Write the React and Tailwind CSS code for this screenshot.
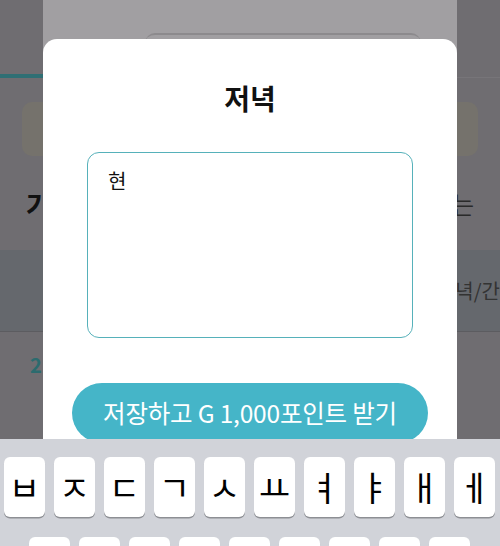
import React from "react";

const row1 = ["ㅂ", "ㅈ", "ㄷ", "ㄱ", "ㅅ", "ㅛ", "ㅕ", "ㅑ", "ㅐ", "ㅔ"];
const row2 = ["ㅁ", "ㄴ", "ㅇ", "ㄹ", "ㅎ", "ㅗ", "ㅓ", "ㅏ", "ㅣ"];

function Key({ ch }) {
  return (
    <div className="w-[41px] h-[60px] shrink-0 rounded-[6px] bg-white shadow-[0_1.5px_0_#8d8f94] flex items-center justify-center text-[34px] leading-none text-black">
      {ch}
    </div>
  );
}

export default function App() {
  return (
    <div
      className="relative w-[500px] h-[546px] overflow-hidden bg-[#6f6d71]"
      style={{ fontFamily: '"Noto Sans CJK KR", "Noto Sans", sans-serif' }}
    >
      {/* dimmed background page */}
      <div className="flex flex-col">
        <div className="h-[74px]" />
        <div className="flex h-[4px]">
          <div className="w-[60px] bg-[#2f6f74]" />
          <div className="flex-1 border-b border-[#777579]" />
        </div>
        <div className="flex justify-between px-[22px] pt-[24px] h-[90px]">
          <div className="w-[160px] h-[54px] rounded-[10px] bg-[#75726c]" />
          <div className="w-[160px] h-[54px] rounded-[10px] bg-[#75726c]" />
        </div>
        <div className="flex justify-between items-center px-[26px] h-[72px]">
          <span className="text-[28px] font-bold text-[#111]">가</span>
          <span className="text-[24px] text-[#2a2a2a]">는</span>
        </div>
        <div className="h-[82px] mt-[10px] bg-[#65686d] border-b border-[#5c5c60] flex items-center justify-end">
          <span className="text-[20px] text-[#333] whitespace-nowrap">녁/간</span>
        </div>
        <div className="flex items-center px-[30px] h-[66px]">
          <span className="text-[20px] font-bold text-[#2c6b6e]">2</span>
        </div>
      </div>

      {/* sheet behind */}
      <div className="absolute left-[43px] top-0 w-[414px] h-[100px] bg-[#a19fa2]">
        <div className="mt-[33px] ml-[102px] w-[276px] h-[20px] rounded-t-[10px] border-t-2 border-[#8c8a8d]" />
      </div>

      {/* modal */}
      <div className="absolute left-[43px] top-[39px] w-[414px] h-[420px] rounded-[14px] bg-white flex flex-col">
        <div className="pt-[41px] text-center text-[28px] leading-[36px] font-bold text-[#111]">
          저녁
        </div>
        <div className="mx-[44px] mt-[36px] h-[186px] rounded-[12px] border-[1.5px] border-[#56b1ba] px-[20px] pt-[16px] text-[20px] leading-[24px] text-[#111]">
          현
        </div>
        <div className="mx-[29px] mt-[45px] h-[60px] rounded-full bg-[#45b5c8] flex items-center justify-center text-[24.5px] tracking-[-0.2px] text-white">
          저장하고 G 1,000포인트 받기
        </div>
      </div>

      {/* keyboard */}
      <div className="absolute left-0 right-0 top-[439px] bottom-0 bg-[#d1d3d9] flex flex-col pt-[18px] gap-[20px]">
        <div className="flex gap-[9px] pl-[4px]">
          {row1.map((c) => (
            <Key key={c} ch={c} />
          ))}
        </div>
        <div className="flex gap-[9px] pl-[29px]">
          {row2.map((c) => (
            <Key key={c} ch={c} />
          ))}
        </div>
      </div>
    </div>
  );
}
